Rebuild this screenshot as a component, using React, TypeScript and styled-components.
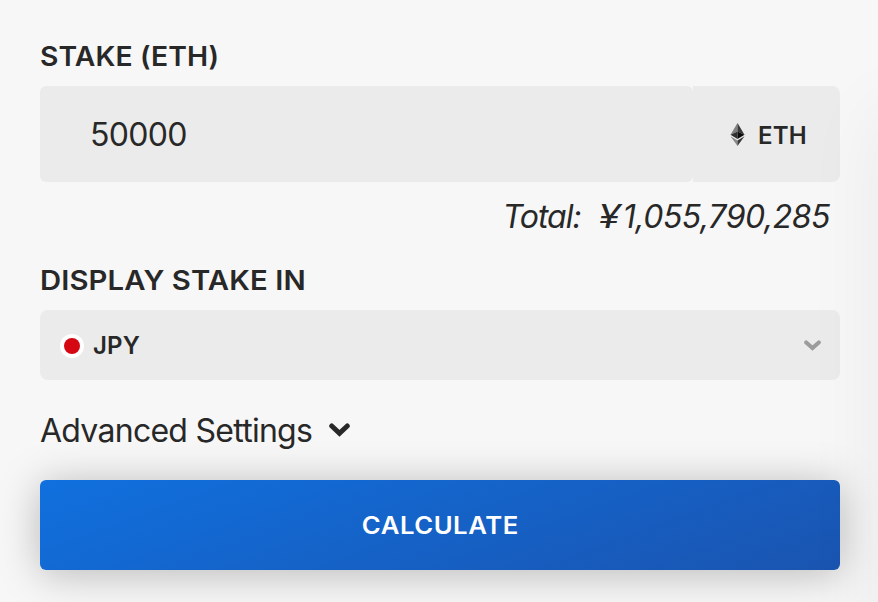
import React from "react";
import styled, { createGlobalStyle } from "styled-components";

const GlobalStyle = createGlobalStyle`
  *, *::before, *::after { box-sizing: border-box; }
  html, body { margin: 0; height: 602px; overflow: hidden; background: #f7f7f7; }
`;

const Panel = styled.form`
  position: relative;
  width: 878px;
  height: 602px;
  padding: 36px 38px 0 40px;
  overflow: hidden;
  display: flex;
  flex-direction: column;
  background: #f7f7f7;
  color: #282828;
  font-family: Inter, "Liberation Sans", sans-serif;

  &::after {
    content: "";
    position: absolute;
    left: 100%;
    top: 110px;
    width: 80px;
    height: 700px;
    box-shadow: 0 0 80px rgba(0, 0, 0, 0.06);
    pointer-events: none;
  }
`;

const Heading = styled.label<{ $stretch: number }>`
  height: 40px;
  margin-bottom: 10px;
  font-size: 27px;
  font-weight: 600;
  line-height: 42px;
  letter-spacing: 0.1px;
  white-space: nowrap;
  transform: scaleX(${(p) => p.$stretch});
  transform-origin: left center;
`;

const StakeRow = styled.div`
  display: flex;
  width: 800px;
  height: 96px;
`;

const Amount = styled.div`
  width: 653px;
  padding-left: 50px;
  border-radius: 6px;
  background: #ebebeb;
  font-size: 32px;
  line-height: 98px;
  letter-spacing: -0.7px;
`;

const Unit = styled.div`
  flex: 1;
  display: flex;
  align-items: center;
  padding-left: 37px;
  gap: 13px;
  border-radius: 0 8px 8px 0;
  background: #ebebeb;
`;

const Code = styled.span<{ $top: number }>`
  font-size: 24px;
  font-weight: 600;
  line-height: 36px;
  letter-spacing: 0.2px;
  padding-top: ${(p) => p.$top}px;
`;

const Total = styled.div`
  display: flex;
  justify-content: flex-end;
  width: 800px;
  height: 78px;
  padding: 15px 10px 0 0;
  font-size: 32px;
  font-style: italic;
  line-height: 40px;
  letter-spacing: -0.45px;
  white-space: nowrap;
`;

const TotalLabel = styled.span`
  margin-right: 17px;
  letter-spacing: -1px;
`;

const Yen = styled.span`
  width: 25px;
  transform: scaleX(1.25);
  transform-origin: left center;
`;

const Select = styled.div`
  display: flex;
  align-items: center;
  width: 800px;
  height: 70px;
  padding: 0 19px 0 20px;
  border-radius: 8px;
  background: #ebebeb;

  svg { margin-left: auto; }
`;

const Flag = styled.span`
  display: grid;
  place-items: center;
  width: 24px;
  height: 24px;
  margin: 2px 9px 0 0;
  border-radius: 50%;
  background: #fff;

  &::before {
    content: "";
    width: 16px;
    height: 16px;
    border-radius: 50%;
    background: #d40713;
  }
`;

const Advanced = styled.div`
  display: flex;
  align-items: center;
  gap: 17px;
  height: 100px;
  font-size: 32px;
  letter-spacing: -0.73px;
  white-space: nowrap;
`;

const Calculate = styled.button`
  width: 800px;
  height: 90px;
  padding: 0;
  border: 0;
  border-radius: 6px;
  background: linear-gradient(160deg, #1070de 0%, #1a54b0 100%);
  box-shadow: 0 4px 42px rgba(0, 0, 0, 0.26);
  color: #fff;
  font-family: inherit;
  font-size: 24px;
  font-weight: 600;
  letter-spacing: 0.5px;
`;

const CalculateLabel = styled.span`
  display: inline-block;
  transform: scaleX(1.07);
`;

const EthIcon = () => (
  <svg width="15" height="23" viewBox="0 0 15 23">
    <path d="M7.5 0 .5 11.7l7-3.2Z" fill="#808080" />
    <path d="m7.5 0 7 11.7-7-3.2Z" fill="#393939" />
    <path d="m.5 11.7 7-3.2v7.4Z" fill="#303030" />
    <path d="m14.5 11.7-7-3.2v7.4Z" fill="#0c0c0c" />
    <path d="m.5 13.2 7 4.2V23Z" fill="#8a8a8a" />
    <path d="m14.5 13.2-7 4.2V23Z" fill="#393939" />
  </svg>
);

const Chevron = ({ width, height, color, stroke }: { width: number; height: number; color: string; stroke: number }) => (
  <svg width={width} height={height} viewBox={`0 0 ${width} ${height}`} fill="none">
    <path
      d={`M${stroke * 0.55} ${stroke * 0.6} L${width / 2} ${height - stroke * 0.75} L${width - stroke * 0.55} ${stroke * 0.6}`}
      stroke={color}
      strokeWidth={stroke}
      strokeLinejoin="miter"
      strokeLinecap="round"
    />
  </svg>
);

export default function App() {
  return (
    <>
      <GlobalStyle />
      <Panel>
        <Heading $stretch={1.048}>STAKE (ETH)</Heading>
        <StakeRow>
          <Amount>50000</Amount>
          <Unit>
            <EthIcon />
            <Code $top={3}>ETH</Code>
          </Unit>
        </StakeRow>
        <Total>
          <TotalLabel>Total:</TotalLabel>
          <Yen>¥</Yen>
          <span>1,055,790,285</span>
        </Total>
        <Heading $stretch={1.084}>DISPLAY STAKE IN</Heading>
        <Select>
          <Flag />
          <Code $top={1}>JPY</Code>
          <Chevron width={17} height={11} color="#9c9c9c" stroke={4} />
        </Select>
        <Advanced>
          <span>Advanced Settings</span>
          <Chevron width={21} height={14} color="#282828" stroke={5} />
        </Advanced>
        <Calculate type="button">
          <CalculateLabel>CALCULATE</CalculateLabel>
        </Calculate>
      </Panel>
    </>
  );
}
